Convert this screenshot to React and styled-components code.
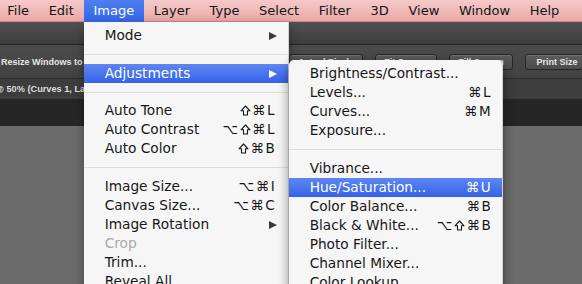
import styled, { createGlobalStyle } from 'styled-components';

const GlobalStyle = createGlobalStyle`
  html, body {
    margin: 0;
    padding: 0;
    background: #6b6b6b;
    overflow: hidden;
  }
`;

const Screen = styled.div`
  width: 582px;
  height: 284px;
  display: flex;
  flex-direction: column;
  overflow: hidden;
  font-family: 'DejaVu Sans', 'Liberation Sans', sans-serif;
`;

const MenuBar = styled.div`
  height: 22px;
  flex: none;
  display: flex;
  margin-left: -2.5px;
  background: linear-gradient(#f5caca, #eba8a8);
  border-bottom: 1px solid #c98a8a;
  box-sizing: border-box;
  position: relative;
  z-index: 5;
`;

const MenuTitle = styled.div`
  position: relative;
  padding: 0 9.8px;
  line-height: 21px;
  font-size: 13px;
  color: ${(p) => (p.$active ? '#fff' : '#151515')};
  background: ${(p) => (p.$active ? 'linear-gradient(#4f7ef0, #3466e8)' : 'none')};
  height: 22px;
`;

const Menu = styled.div`
  position: absolute;
  top: ${(p) => p.$top}px;
  left: ${(p) => p.$left};
  width: ${(p) => p.$w}px;
  height: 300px;
  padding-top: 4px;
  box-sizing: border-box;
  background: #f6f6f6;
  border-right: 1px solid #d2d2d2;
  border-radius: ${(p) => (p.$sub ? '5px 5px 0 0' : '0')};
  box-shadow: ${(p) => (p.$sub ? '0 4px 12px rgba(0,0,0,0.45)' : '0 4px 10px rgba(0,0,0,0.35)')};
  z-index: 10;
`;

const Row = styled.div`
  position: relative;
  height: 19px;
  display: flex;
  align-items: center;
  padding: 0 ${(p) => p.$padR}px 0 21px;
  font-size: 13.7px;
  color: ${(p) => (p.$active ? '#fff' : p.$disabled ? '#a9a9a9' : '#161616')};
  background: ${(p) => (p.$active ? 'linear-gradient(#5f86f2, #3563e8)' : 'none')};
  white-space: nowrap;
`;

const Label = styled.span`
  flex: 1;
`;

const Keys = styled.span`
  display: flex;
  align-items: center;
  gap: 1.5px;
  font-size: 13.5px;
`;

const Arrow = styled.span`
  width: 0;
  height: 0;
  margin-right: -2px;
  border-top: 4.5px solid transparent;
  border-bottom: 4.5px solid transparent;
  border-left: 8px solid ${(p) => (p.$active ? '#fff' : '#3a3a3a')};
`;

const Separator = styled.div`
  height: ${(p) => p.$h || 19}px;
  display: flex;
  align-items: center;
  &::after {
    content: '';
    flex: 1;
    height: 1px;
    background: #dddddd;
  }
`;

const Toolbar = styled.div`
  height: 22px;
  flex: none;
  background: linear-gradient(#515151, #3d3d3d);
  border-bottom: 1px solid #262626;
`;

const OptionsBar = styled.div`
  height: 33px;
  flex: none;
  display: flex;
  align-items: center;
  gap: 12px;
  background: linear-gradient(#4b4b4b, #424242);
  border-bottom: 1px solid #2a2a2a;
  font-family: 'Liberation Sans', Arial, sans-serif;
  font-weight: bold;
  font-size: 9px;
  color: #e6e6e6;
`;

const OptionLabel = styled.div`
  width: 276px;
  flex: none;
  padding-left: 1px;
  white-space: nowrap;
  overflow: hidden;
`;

const ToolButton = styled.div`
  width: ${(p) => p.$w}px;
  flex: none;
  height: 16px;
  box-sizing: border-box;
  border: 1px solid #262626;
  border-radius: 3px;
  background: linear-gradient(#5c5c5c, #4c4c4c);
  box-shadow: inset 0 1px 0 rgba(255,255,255,0.12);
  display: flex;
  align-items: center;
  justify-content: center;
  white-space: nowrap;
  overflow: hidden;
`;

const TabBar = styled.div`
  height: 20px;
  flex: none;
  display: flex;
  align-items: center;
  background: #3d3d3d;
  font-family: 'Liberation Sans', Arial, sans-serif;
  font-weight: bold;
  font-size: 9.2px;
  color: #dcdcdc;
  white-space: nowrap;
`;

const TabTitle = styled.span`
  margin-left: -5px;
`;

const DarkStrip = styled.div`
  height: 27px;
  flex: none;
  background: #262626;
`;

const Canvas = styled.div`
  flex: 1;
  background: #6b6b6b;
`;

// hollow shift arrow, as the Mac menus draw it
const ShiftKey = () => (
  <svg width="11" height="11" viewBox="0 0 11 11">
    <path
      d="M5.5 1 L10 5.8 H7.5 V10 H3.5 V5.8 H1 Z"
      fill="none"
      stroke="currentColor"
      strokeWidth="1.1"
      strokeLinejoin="round"
    />
  </svg>
);

const titles = ['File', 'Edit', 'Image', 'Layer', 'Type', 'Select', 'Filter', '3D', 'View', 'Window', 'Help'];

const imageItems = [
  { label: 'Mode', arrow: true },
  { sep: 19 },
  { label: 'Adjustments', arrow: true, active: true, sub: true },
  { sep: 18 },
  { label: 'Auto Tone', keys: '⇧⌘L' },
  { label: 'Auto Contrast', keys: '⌥⇧⌘L' },
  { label: 'Auto Color', keys: '⇧⌘B' },
  { sep: 19 },
  { label: 'Image Size...', keys: '⌥⌘I' },
  { label: 'Canvas Size...', keys: '⌥⌘C' },
  { label: 'Image Rotation', arrow: true },
  { label: 'Crop', disabled: true },
  { label: 'Trim...' },
  { label: 'Reveal All' },
];

const adjustItems = [
  { label: 'Brightness/Contrast...' },
  { label: 'Levels...', keys: '⌘L' },
  { label: 'Curves...', keys: '⌘M' },
  { label: 'Exposure...' },
  { sep: 19 },
  { label: 'Vibrance...' },
  { label: 'Hue/Saturation...', keys: '⌘U', active: true },
  { label: 'Color Balance...', keys: '⌘B' },
  { label: 'Black & White...', keys: '⌥⇧⌘B' },
  { label: 'Photo Filter...' },
  { label: 'Channel Mixer...' },
  { label: 'Color Lookup...' },
];

const Shortcut = ({ keys }) => (
  <Keys>
    {[...keys].map((k, i) => (k === '⇧' ? <ShiftKey key={i} /> : <span key={i}>{k}</span>))}
  </Keys>
);

const MenuRows = ({ items, padR, children }) =>
  items.map((it, i) =>
    it.sep ? (
      <Separator key={i} $h={it.sep} />
    ) : (
      <Row key={i} $active={it.active} $disabled={it.disabled} $padR={padR}>
        <Label>{it.label}</Label>
        {it.keys && <Shortcut keys={it.keys} />}
        {it.arrow && <Arrow $active={it.active} />}
        {it.sub && children}
      </Row>
    )
  );

const App = () => {
  return (
    <Screen>
      <GlobalStyle />
      <MenuBar>
        {titles.map((t) => (
          <MenuTitle key={t} $active={t === 'Image'}>
            {t}
            {t === 'Image' && (
              <Menu $top={22} $left="0" $w={205}>
                <MenuRows items={imageItems} padR={13}>
                  <Menu $top={-4} $left="205px" $w={214} $sub>
                    <MenuRows items={adjustItems} padR={11} />
                  </Menu>
                </MenuRows>
              </Menu>
            )}
          </MenuTitle>
        ))}
      </MenuBar>
      <Toolbar />
      <OptionsBar>
        <OptionLabel>Resize Windows to Fit</OptionLabel>
        <ToolButton $w={74}>Actual Pixels</ToolButton>
        <ToolButton $w={62}>Fit Screen</ToolButton>
        <ToolButton $w={64}>Fill Screen</ToolButton>
        <ToolButton $w={64}>Print Size</ToolButton>
      </OptionsBar>
      <TabBar>
        <TabTitle>@ 50% (Curves 1, Layer Mask/8) *</TabTitle>
      </TabBar>
      <DarkStrip />
      <Canvas />
    </Screen>
  );
};

export default App;
